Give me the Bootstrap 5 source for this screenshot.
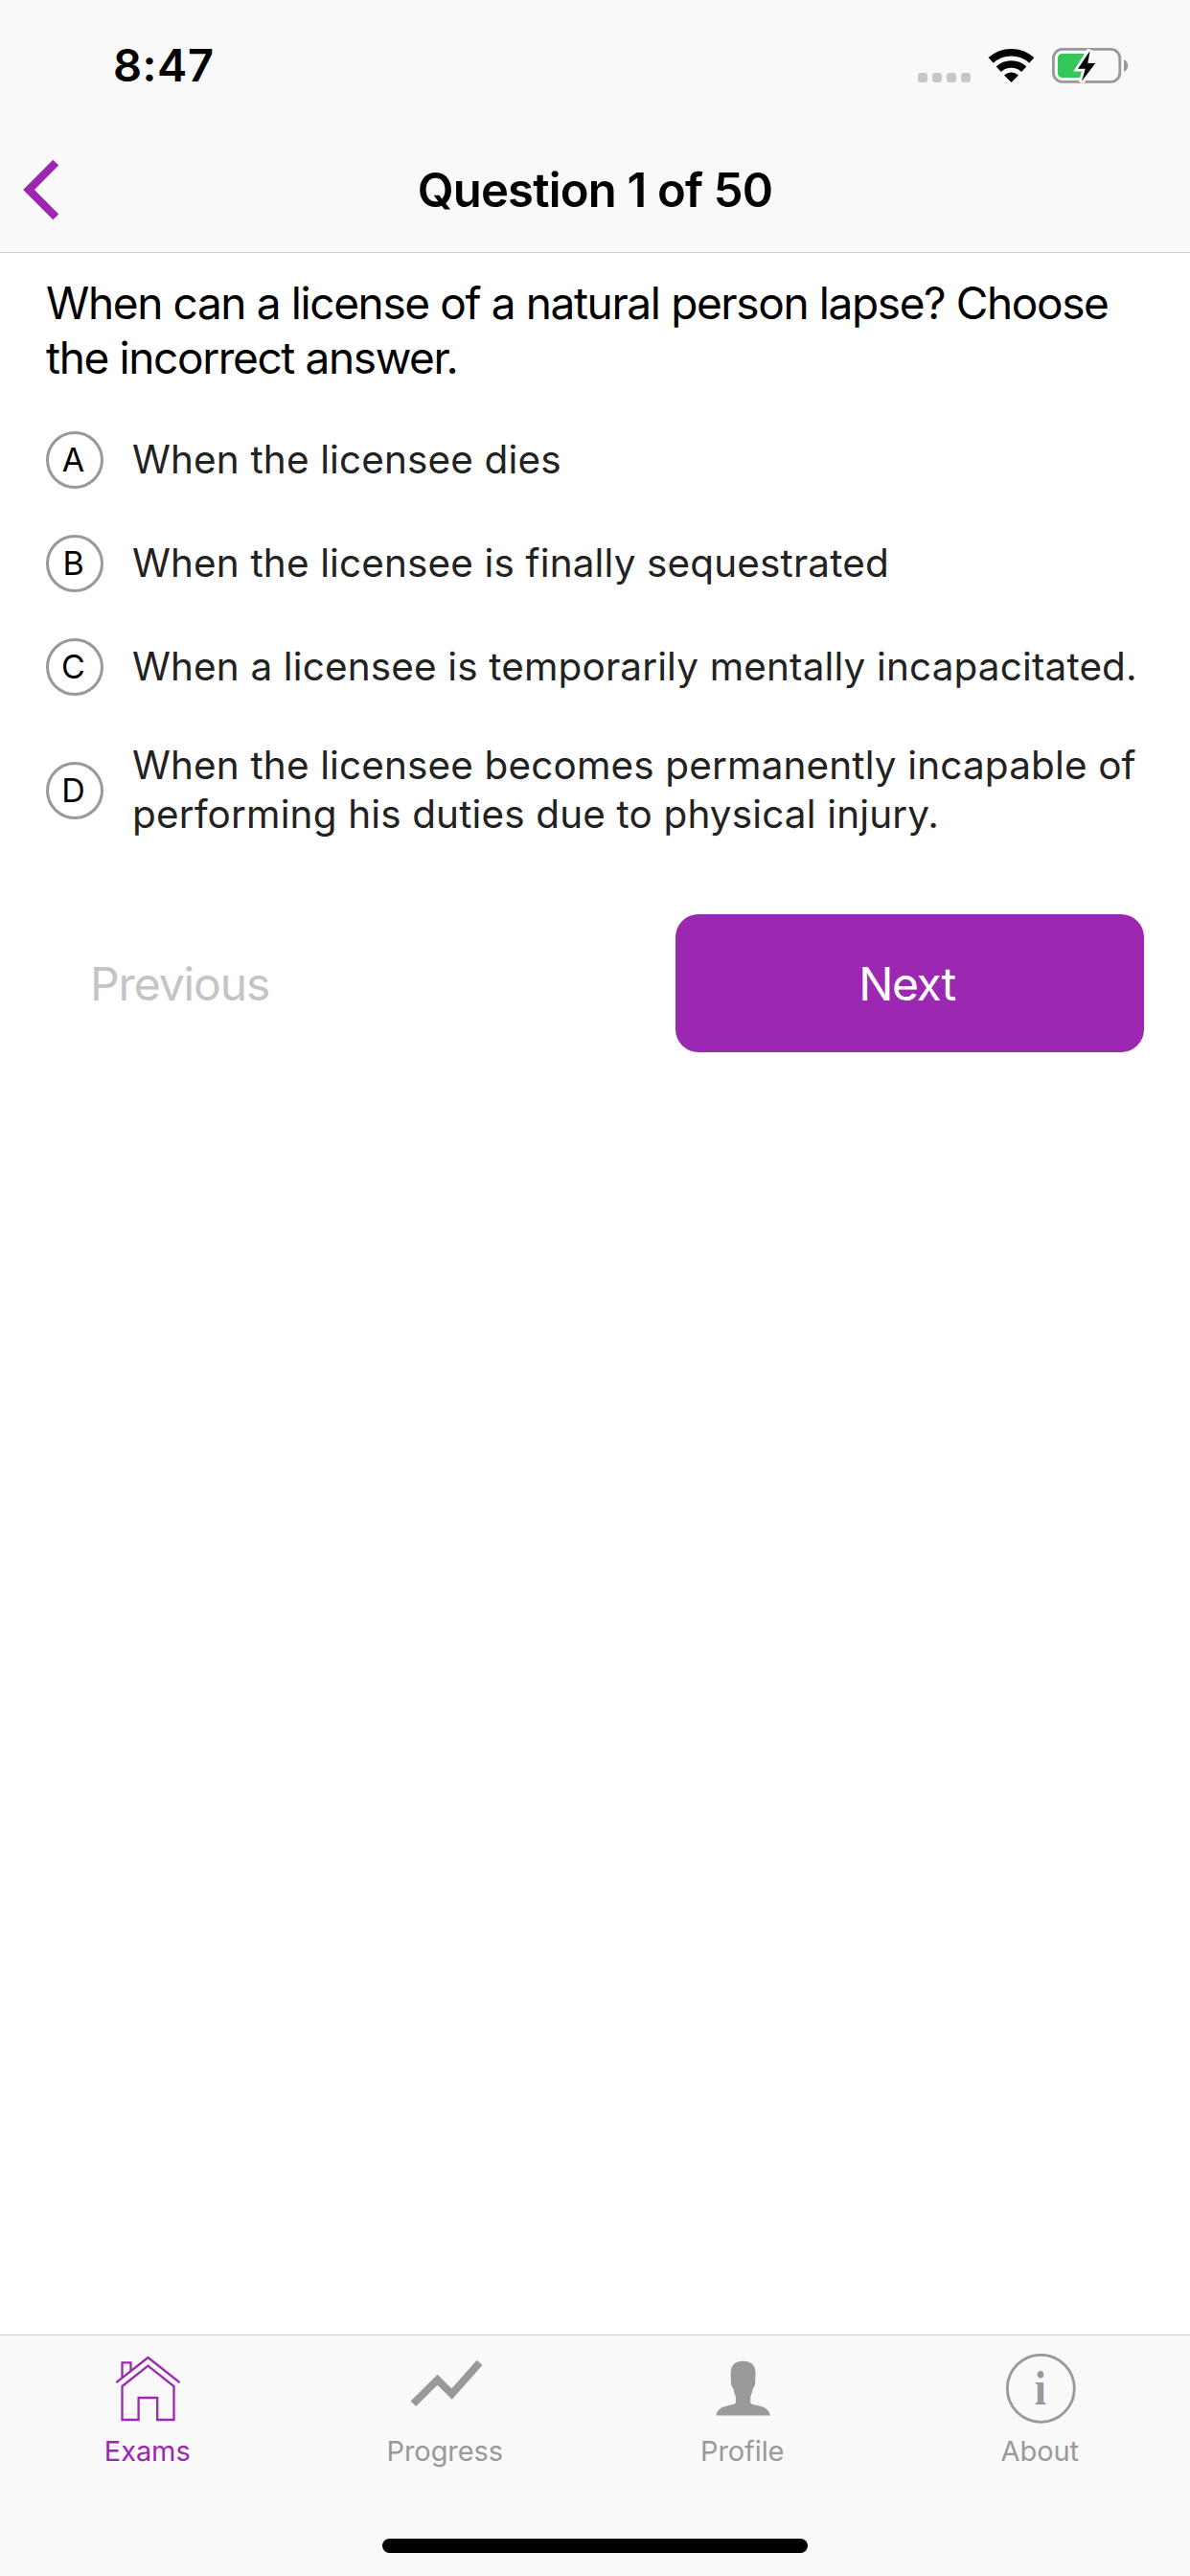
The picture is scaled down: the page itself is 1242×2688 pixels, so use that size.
<!DOCTYPE html>
<html lang="en">
<head>
<meta charset="utf-8">
<meta name="viewport" content="width=device-width, initial-scale=1">
<title>Question 1 of 50</title>
<link href="https://cdn.jsdelivr.net/npm/bootstrap@5.3.0/dist/css/bootstrap.min.css" rel="stylesheet">
<style>
  :root { --brand: #9c27b0; --muted: #999; --bar: #f9f9f9; --hairline: #d0d0d0; }
  body { font-family: Inter, "Liberation Sans", sans-serif; color: #000; background: #fff; }
  svg { display: block; }
  .app-top { background: var(--bar); border-bottom: 1px solid var(--hairline); height: 264px; }
  .status-row { height: 132px; padding: 4px 62px 0 118px; }
  .clock { font-size: 47px; font-weight: 600; line-height: 60px; letter-spacing: .5px; }
  .title-row { height: 131px; }
  .title-side { width: 120px; padding-left: 22px; }
  .screen-title { font-size: 49px; font-weight: 600; line-height: 60px; letter-spacing: -.8px; padding-top: 2px; }
  .question-area { padding: 24px 48px 0; }
  .question-text { font-size: 46px; line-height: 57px; letter-spacing: -1.38px; margin-bottom: 24px; }
  .answer { padding: 24px 0; gap: 30px; }
  .answer-key { width: 60px; height: 60px; border: 3px solid var(--muted); font-size: 34px; line-height: 54px; padding-right: 3px; }
  .answer-text { font-size: 40.5px; line-height: 51px; letter-spacing: .13px; color: #222; margin: -1px -10px 1px 0; }
  .pager { margin-top: 54px; }
  .pager .btn { height: 144px; border: 0; border-radius: 24px; font-size: 48px; line-height: 60px; }
  .btn-prev, .btn-prev:disabled { color: #c4c4c6; opacity: 1; letter-spacing: -1.1px; }
  .pager .btn-prev { padding: 1px 45px 0 46px; }
  .btn-next { width: 489px; background: var(--brand); color: #fff; letter-spacing: -1.3px; }
  .pager .btn-next { padding: 1px 6px 0 0; }
  .tab-area { background: var(--bar); border-top: 1px solid var(--hairline); height: 252px; }
  .tab-item { padding: 19px 0 0; color: var(--muted); font-size: 29px; line-height: 35px; letter-spacing: -.1px; text-decoration: none; }
  .tab-item.active { color: var(--brand); }
  .tab-item span { margin-top: 11px; padding-right: 3px; }
  .home-bar { width: 444px; height: 15px; background: #000; margin-bottom: 24px; }
</style>
</head>
<body class="vh-100 d-flex flex-column overflow-hidden">

<header class="app-top flex-shrink-0">
  <div class="status-row d-flex align-items-center justify-content-between">
    <span class="clock">8:47</span>
    <svg width="225" height="42" viewBox="0 -1 225 42" aria-hidden="true">
      <g fill="#c7c7c7">
        <rect x="3" y="28" width="10" height="10" rx="3"/>
        <rect x="18" y="28" width="10" height="10" rx="3"/>
        <rect x="33" y="28" width="10" height="10" rx="3"/>
        <rect x="48" y="28" width="10" height="10" rx="3"/>
      </g>
      <g fill="none" stroke="#000" stroke-width="7.6">
        <path d="M79.2 14.9A31.8 31.8 0 0 1 121.8 14.9"/>
        <path d="M87.3 24.2A19.2 19.2 0 0 1 113.7 24.2"/>
      </g>
      <path d="M100.5 38L93 30.4Q100.5 24.6 108 30.4Z"/>
      <rect x="144.4" y="3.4" width="69.4" height="34" rx="9.5" fill="none" stroke="#999" stroke-width="2.8"/>
      <path d="M154 8H177L173 33H154Q149 33 149 28V13Q149 8 154 8Z" fill="#34c759"/>
      <path d="M182.6 4L170.3 23.7H177.7L173.6 38L188 18H180.3Z" fill="#f9f9f9" stroke="#f9f9f9" stroke-width="5.5"/>
      <path d="M182.5 5.3L170 23.7H177.7L174 36.7L188.2 18H180.3Z"/>
      <path d="M218 14Q222.2 16 222.2 20.5Q222.2 25 218 27Z" fill="#999"/>
    </svg>
  </div>
  <div class="title-row d-flex align-items-center justify-content-between">
    <div class="title-side">
      <svg width="42" height="70" viewBox="0 0 42 70" role="img" aria-label="Back"><path d="M36.3 6.6L8 35L36.3 63.4" fill="none" stroke="#9c27b0" stroke-width="8.3"/></svg>
    </div>
    <h1 class="screen-title m-0">Question 1 of 50</h1>
    <div class="title-side"></div>
  </div>
</header>

<main class="question-area flex-grow-1">
  <p class="question-text">When can a license of a natural person lapse? Choose the incorrect answer.</p>
  <div class="answer d-flex align-items-center">
    <span class="answer-key rounded-circle flex-shrink-0 text-center">A</span>
    <span class="answer-text">When the licensee dies</span>
  </div>
  <div class="answer d-flex align-items-center">
    <span class="answer-key rounded-circle flex-shrink-0 text-center">B</span>
    <span class="answer-text">When the licensee is finally sequestrated</span>
  </div>
  <div class="answer d-flex align-items-center">
    <span class="answer-key rounded-circle flex-shrink-0 text-center">C</span>
    <span class="answer-text">When a licensee is temporarily mentally incapacitated.</span>
  </div>
  <div class="answer d-flex align-items-center">
    <span class="answer-key rounded-circle flex-shrink-0 text-center">D</span>
    <span class="answer-text">When the licensee becomes permanently incapable of performing his duties due to physical injury.</span>
  </div>
  <div class="pager d-flex justify-content-between">
    <button class="btn btn-prev" disabled>Previous</button>
    <button class="btn btn-next">Next</button>
  </div>
</main>

<footer class="tab-area flex-shrink-0 d-flex flex-column justify-content-between align-items-center">
  <nav class="row g-0 w-100">
    <a class="tab-item active col d-flex flex-column align-items-center">
      <svg width="100" height="73" viewBox="0 0 100 73" fill="none" stroke="currentColor" stroke-width="2.3">
        <path d="M16.3 30.2L49.5 4L82.6 30.2"/>
        <path d="M22.5 25.2V9.3H31.5V18"/>
        <path d="M22.5 34L49.5 12.7L76.5 34V69H59.2V46H39.6V69H22.5Z"/>
      </svg>
      <span>Exams</span>
    </a>
    <a class="tab-item col d-flex flex-column align-items-center">
      <svg width="100" height="73" viewBox="0 0 100 73" fill="none" stroke="currentColor" stroke-width="7.8">
        <path d="M15.3 52.3L40.6 27.3L55.6 42L84.6 9.3"/>
      </svg>
      <span>Progress</span>
    </a>
    <a class="tab-item col d-flex flex-column align-items-center">
      <svg width="100" height="73" viewBox="0 0 100 73" fill="currentColor">
        <path d="M21.4 64.6C22 58 29 54.6 36 53.7C40 53.1 41.9 52.4 41.9 50.8V44.6C40.6 42.5 40 39.5 39.4 36.6C37.6 34.5 36.6 31 36.9 28.2L36.7 20C36.7 12 41.5 7.8 49.5 7.8S62.6 12 62.6 20L62.2 28.2C62.6 31 61.6 34.5 59.8 36.6C59.2 39.5 58.6 42.5 57.3 44.6V50.8C57.3 52.4 59.2 53.1 63.2 53.7C70.2 54.6 77.2 58 77.8 64.6Z"/>
      </svg>
      <span>Profile</span>
    </a>
    <a class="tab-item col d-flex flex-column align-items-center">
      <svg width="100" height="73" viewBox="0 0 100 73" fill="currentColor">
        <circle cx="49.3" cy="36.3" r="35" fill="none" stroke="currentColor" stroke-width="2.8"/>
        <text transform="translate(48.8 53.4) scale(.86 1)" text-anchor="middle" font-family="Liberation Serif, serif" font-weight="700" font-size="51" letter-spacing="0">i</text>
      </svg>
      <span>About</span>
    </a>
  </nav>
  <div class="home-bar rounded-pill"></div>
</footer>

<script src="https://cdn.jsdelivr.net/npm/bootstrap@5.3.0/dist/js/bootstrap.bundle.min.js"></script>
</body>
</html>
